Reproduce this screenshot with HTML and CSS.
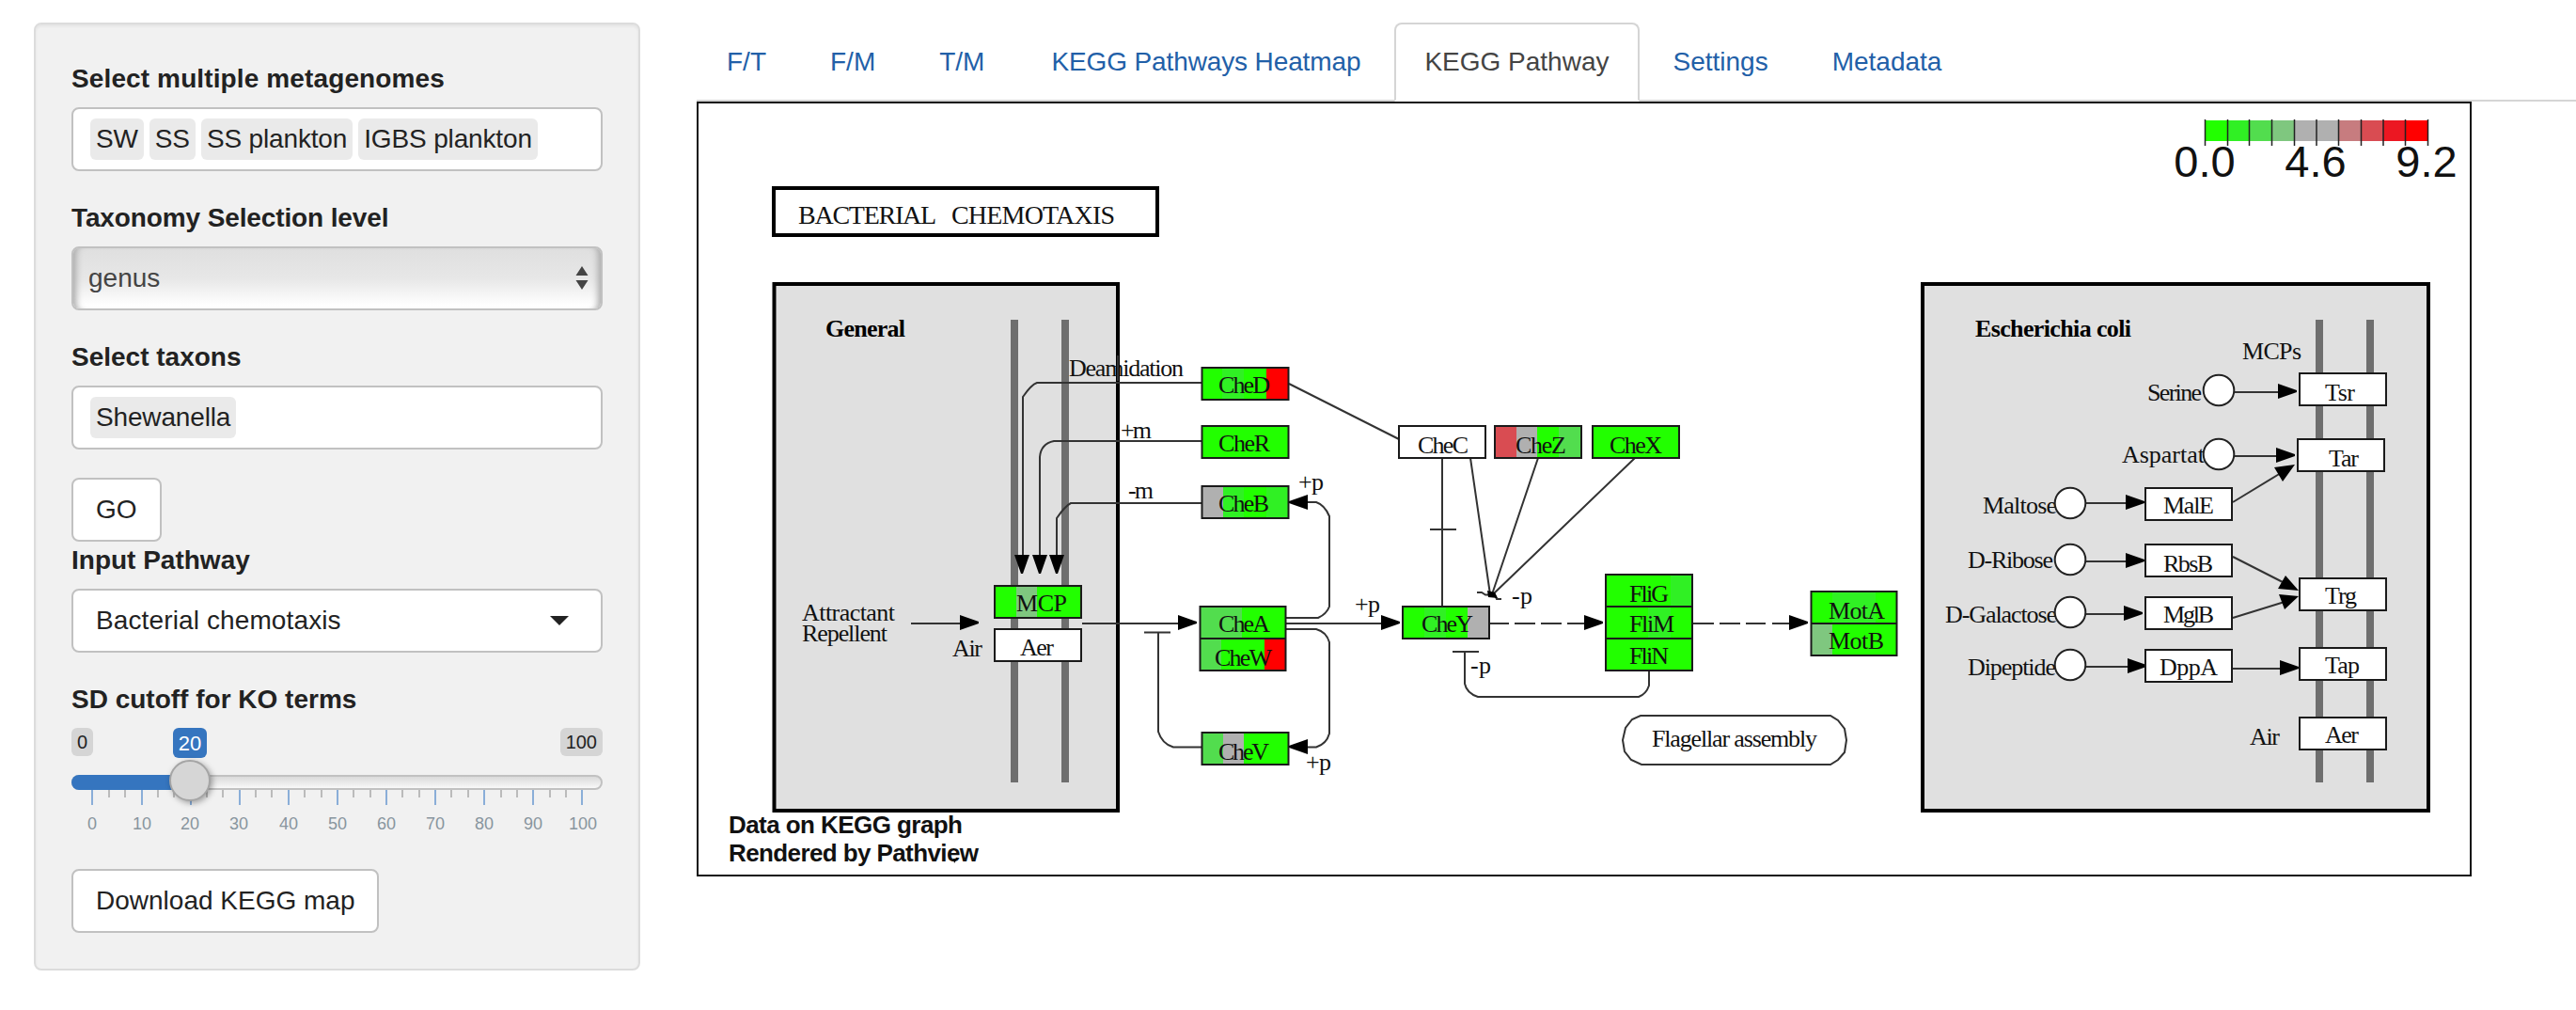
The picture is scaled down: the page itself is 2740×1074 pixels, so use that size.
FILE: index.html
```html
<!DOCTYPE html>
<html lang="en">
<head>
<meta charset="utf-8">
<title>KEGG Pathway</title>
<link rel="stylesheet" href="styles.css">
</head>
<body>
<div class="layout">
  <aside class="well">
    <div class="field">
      <label class="label wide">Select multiple metagenomes</label>
      <div class="control tags"><span class="tag">SW</span><span class="tag">SS</span><span class="tag">SS plankton</span><span class="tag">IGBS plankton</span></div>
    </div>
    <div class="field">
      <label class="label tight">Taxonomy Selection level</label>
      <div class="control native"><span>genus</span>
        <svg class="updown" width="14" height="26" viewBox="0 0 14 26"><path d="M7 0 13.5 10H.5zM7 25 13.5 15H.5z" fill="#444"/></svg>
      </div>
    </div>
    <div class="field">
      <label class="label">Select taxons</label>
      <div class="control tags"><span class="tag">Shewanella</span></div>
    </div>
    <button class="btn">GO</button>
    <div class="field">
      <label class="label">Input Pathway</label>
      <div class="control dropdown"><span class="wide">Bacterial chemotaxis</span>
        <svg width="20" height="10" viewBox="0 0 20 10"><path d="M0 0H20L10 10z" fill="#222"/></svg>
      </div>
    </div>
    <div class="slider-field">
      <label class="label">SD cutoff for KO terms</label>
      <div class="slider">
        <div class="limits"><span class="limit">0</span><span class="limit">100</span></div>
        <div class="track"><div class="fill"></div></div>
        <svg class="scale" width="565" height="50" viewBox="0 0 565 50">
          <path class="minor" d="M40 0v8M57 0v8M92 0v8M109 0v8M144 0v8M161 0v8M196 0v8M213 0v8M248 0v8M266 0v8M300 0v8M318 0v8M352 0v8M370 0v8M404 0v8M422 0v8M457 0v8M474 0v8M509 0v8M526 0v8"/>
          <path class="major" d="M22 0v16M75 0v16M127 0v16M179 0v16M231 0v16M283 0v16M335 0v16M387 0v16M439 0v16M491 0v16M543 0v16"/>
          <g class="nums"><text x="22" y="42">0</text><text x="75" y="42">10</text><text x="126" y="42">20</text><text x="178" y="42">30</text><text x="231" y="42">40</text><text x="283" y="42">50</text><text x="335" y="42">60</text><text x="387" y="42">70</text><text x="439" y="42">80</text><text x="491" y="42">90</text><text x="544" y="42">100</text></g>
        </svg>
        <span class="current">20</span>
        <span class="handle"></span>
      </div>
    </div>
    <button class="btn">Download KEGG map</button>
  </aside>

  <main class="content">
    <nav class="tabs">
      <a class="tab">F/T</a><a class="tab">F/M</a><a class="tab short">T/M</a><a class="tab tight">KEGG Pathways Heatmap</a><a class="tab active">KEGG Pathway</a><a class="tab">Settings</a><a class="tab">Metadata</a>
    </nav>
    <svg class="map" width="1888" height="824" viewBox="741 108 1888 824">
      <defs><path id="ar" d="M0-8 20-1V1L0 8z"/></defs>
      <rect x="742" y="109" width="1886" height="822" fill="#fff" stroke="#111" stroke-width="2"/>

      <rect x="823" y="200" width="408" height="50" class="frame nofill"/>
      <text x="849" y="238" class="title" textLength="147">BACTERIAL</text>
      <text x="1012" y="238" class="title" textLength="174">CHEMOTAXIS</text>

      <!-- colour key -->
      <g>
        <rect x="2345" y="128" width="24" height="22" fill="#22ff00"/><rect x="2369" y="128" width="24" height="22" fill="#30f024"/><rect x="2393" y="128" width="24" height="22" fill="#52dd4e"/><rect x="2416" y="128" width="24" height="22" fill="#7fc77f"/><rect x="2440" y="128" width="48" height="22" fill="#b0b0b0"/><rect x="2488" y="128" width="24" height="22" fill="#c77c7f"/><rect x="2511" y="128" width="24" height="22" fill="#d94c52"/><rect x="2535" y="128" width="24" height="22" fill="#ec1722"/><rect x="2559" y="128" width="24" height="22" fill="#f00"/>
        <path class="keyticks" d="M2345.5 127v28M2369.5 127v28M2392.500 127v28M2416.500 127v28M2440.500 127v28M2464 127v28M2487.500 127v28M2511.500 127v28M2535 127v28M2558.500 127v28M2582.500 127v28"/>
        <g class="keynum"><text x="2345" y="188">0.0</text><text x="2463" y="188">4.6</text><text x="2581" y="188">9.2</text></g>
      </g>

      <!-- cell panels and membranes -->
      <rect x="823.5" y="302" width="365.500" height="560" class="frame panel"/>
      <rect x="2045" y="302" width="538" height="560" class="frame panel"/>
      <path class="membrane" d="M1079 340V832M1133 340V832M2467 340V832M2521 340V832"/>

      <!-- connectors -->
      <g class="line">
        <path d="M1278 407H1103Q1097 409 1088 422V592M1278 469H1121Q1107 472 1106 486V592M1278 535H1139Q1133 538 1124 551V592"/>
        <path d="M1391 534H1400Q1409 537 1414 549V645Q1411 653 1402 657H1368M1151 663H1255M1368 663H1471M1368 669H1400Q1411 672 1414 683V780Q1411 791 1400 794.500H1388"/>
        <path d="M1278 794.500H1248Q1236 791 1232 778V672.500M1217 672.500H1245M1371 408 1488 467M1534 487V644M1521 563H1549"/>
        <path d="M1564 487 1585 632M1636 487 1587 632M1739 487 1588 632M1571 630H1576L1580 632.500H1590L1592 637H1597"/>
        <path d="M1585 663H1605M1611 663H1633M1639 663H1661M1667 663H1687M1801 663H1823M1829 663H1851M1857 663H1878M1885 663H1905"/>
        <path d="M1545 693H1573M1558 693V727Q1560 737 1572 741H1743Q1751 738 1754 729V714M969 663H1023"/>
        <path d="M2377 417H2425M2377 485H2423M2218 535H2263M2218 597H2263M2218 653H2261M2218 709H2265M2375 711H2427M2375 534 2426 503M2375 592 2430 620M2375 657 2430 640"/>
        <path d="M1745 761H1947L1955 766 1962 775 1964 787 1962 800 1955 808 1947 813H1746L1735 808 1728 799 1726 787 1729 774 1736 765z"/>
      </g>
      <path d="M1582 628 1590 630 1593 636 1583 635z"/>
      <g>
        <use href="#ar" transform="translate(1087 590) rotate(90)"/><use href="#ar" transform="translate(1106 590) rotate(90)"/><use href="#ar" transform="translate(1124 590) rotate(90)"/>
        <use href="#ar" transform="translate(1391 534) rotate(180)"/><use href="#ar" transform="translate(1391 794) rotate(180)"/>
        <use href="#ar" x="1021" y="662"/><use href="#ar" x="1253" y="662"/><use href="#ar" x="1469" y="662"/><use href="#ar" x="1685" y="662"/><use href="#ar" x="1903" y="662"/>
        <use href="#ar" x="2423" y="416"/><use href="#ar" x="2421" y="484"/><use href="#ar" x="2261" y="534"/><use href="#ar" x="2261" y="596"/><use href="#ar" x="2259" y="652"/><use href="#ar" x="2263" y="708"/><use href="#ar" x="2425" y="710"/>
        <path d="M2441 494 2419 497 2428 512zM2445 628 2431 612 2423 626zM2445 634 2424 632 2430 648z"/>
      </g>

      <!-- gene boxes: expression per sample -->
      <g fill="#22ff00">
        <path d="M1278 391h92v34h-92zM1278 453h92v34h-92zM1278 516h92v34h-92zM1058 623h92v34h-92zM1276 645h92v68h-92zM1278 779h92v34h-92zM1492 645h92v34h-92zM1590 453h92v34h-92zM1694 453h92v34h-92zM1708 611h92v102h-92zM1926 629h92v68h-92z"/>
      </g>
      <path fill="#30f024" d="M1300 391h23v34h-23zM1301 516h22v34h-22zM1347 516h23v34h-23zM1515 645h23v34h-23zM1777 611h23v34h-23zM1753 645h24v34h-24zM1949 629h46v34h-46z"/>
      <path fill="#52dd4e" d="M1276 645h45v34h-45zM1276 679h23v34h-23zM1278 779h23v34h-23zM1658 453h24v34h-24z"/>
      <path fill="#7fc77f" d="M1081 623h22v34h-22zM1926 663h23v34h-23z"/>
      <path fill="#b0b0b0" d="M1278 516h23v34h-23zM1301 779h22v34h-22zM1561 645h23v34h-23zM1613 453h22v34h-22z"/>
      <path fill="#d94c52" d="M1590 453h23v34h-23z"/>
      <path fill="#f00" d="M1347 391h23v34h-23zM1345 679h23v34h-23z"/>
      <path class="box" d="M1278.500 391h92v34h-92zM1278.500 453h92v34h-92zM1278.500 517h92v34h-92zM1058 623h92v34h-92zM1276.500 645h91v68h-91zM1276.500 679h91M1278.500 779h92v34h-92zM1492 645h92v34h-92zM1590 453h92v34h-92zM1694 453h92v34h-92zM1708 611h92v102h-92zM1708 645h92M1708 679h92M1926.500 629h91v68h-91zM1926.500 663h91"/>
      <path class="box white" d="M1488 453h92v34h-92zM1058 669h92v34h-92zM2446 397h92v34h-92zM2444 467h92v34h-92zM2282 519h92v34h-92zM2282 579h92v34h-92zM2282 635h92v34h-92zM2282 691h92v34h-92zM2446 615h92v34h-92zM2446 689h92v34h-92zM2446 763h92v34h-92z"/>

      <g class="txt">
        <text x="878" y="358" class="b" textLength="85">General</text><text x="2101" y="358" class="b" textLength="166">Escherichia coli</text>
        <text x="1137" y="400" textLength="122">Deamidation</text><text x="1192" y="466" textLength="33">+m</text><text x="1200" y="530" textLength="27">-m</text>
        <text x="1296" y="418" textLength="55">CheD</text><text x="1296" y="480" textLength="55">CheR</text><text x="1296" y="544" textLength="54">CheB</text>
        <text x="1508" y="482" textLength="54">CheC</text><text x="1612" y="482" textLength="54">CheZ</text><text x="1712" y="482" textLength="56">CheX</text>
        <text x="1381" y="521" textLength="27">+p</text><text x="1441" y="651" textLength="27">+p</text><text x="1389" y="819" textLength="27">+p</text><text x="1608" y="642" textLength="22">-p</text><text x="1564" y="716" textLength="22">-p</text>
        <text x="1081" y="650" textLength="54">MCP</text><text x="1085" y="697" textLength="36">Aer</text><text x="1013" y="698" textLength="32">Air</text>
        <text x="853" y="660" textLength="99">Attractant</text><text x="853" y="682" textLength="91">Repellent</text>
        <text x="1296" y="672" textLength="55">CheA</text><text x="1292" y="708" textLength="61">CheW</text><text x="1296" y="808" textLength="54">CheV</text><text x="1512" y="672" textLength="55">CheY</text>
        <text x="1733" y="640" textLength="42">FliG</text><text x="1733" y="672" textLength="48">FliM</text><text x="1733" y="706" textLength="42">FliN</text>
        <text x="1945" y="658" textLength="60">MotA</text><text x="1945" y="690" textLength="59">MotB</text>
        <text x="1757" y="794" textLength="176">Flagellar assembly</text>
        <text x="2385" y="382" textLength="63">MCPs</text><text x="2284" y="426" textLength="58">Serine</text><text x="2257" y="492" textLength="88">Aspartat</text><text x="2109" y="546" textLength="79">Maltose</text><text x="2093" y="604" textLength="91">D-Ribose</text><text x="2069" y="662" textLength="119">D-Galactose</text><text x="2093" y="718" textLength="94">Dipeptide</text>
        <text x="2473" y="426" textLength="32">Tsr</text><text x="2477" y="496" textLength="32">Tar</text><text x="2301" y="546" textLength="54">MalE</text><text x="2301" y="608" textLength="53">RbsB</text><text x="2301" y="662" textLength="54">MglB</text><text x="2297" y="718" textLength="62">DppA</text>
        <text x="2473" y="642" textLength="34">Trg</text><text x="2473" y="716" textLength="37">Tap</text><text x="2473" y="790" textLength="36">Aer</text><text x="2393" y="792" textLength="32">Air</text>
      </g>
      <path class="line" d="M1189 378V405"/>
      <g class="compound"><circle cx="2360" cy="415" r="16.300"/><circle cx="2360" cy="483" r="16.300"/><circle cx="2202" cy="535" r="16.300"/><circle cx="2202" cy="595" r="16.300"/><circle cx="2202" cy="651" r="16.300"/><circle cx="2202" cy="707" r="16.300"/></g>
      <g class="credit"><text x="775" y="886" textLength="249">Data on KEGG graph</text><text x="775" y="916" textLength="266">Rendered by Pathview</text></g>
      <path d="M1014 913H1018L1015 918z"/>
    </svg>
  </main>
</div>
</body>
</html>
```
FILE: styles.css
```css
* { box-sizing: border-box; }
body {
  margin: 0;
  background: #fff;
  color: #222;
  font: 28px/40px "Liberation Sans", Arial, sans-serif;
  overflow: hidden;
}
.layout {
  display: flex;
  align-items: flex-start;
  gap: 60px;
  padding: 24px 0 0 36px;
}
.well {
  width: 645px;
  height: 1008px;
  flex: none;
  display: flex;
  flex-direction: column;
  align-items: flex-start;
  padding: 38px;
  background: #f1f1f1;
  border: 2px solid #dcdcdc;
  border-radius: 8px;
  box-shadow: inset 0 2px 3px rgba(0, 0, 0, .06);
}
.field { width: 565px; margin-bottom: 30px; }
.label {
  display: block;
  margin-bottom: 10px;
  font-weight: bold;
}
.control {
  height: 68px;
  display: flex;
  align-items: center;
  background: #fff;
  border: 2px solid #c1c1c1;
  border-radius: 8px;
}
.tags { gap: 6px; padding: 0 18px; }
.tag {
  height: 44px;
  padding: 0 6px;
  line-height: 44px;
  letter-spacing: -.15px;
  white-space: nowrap;
  background: #eaeaea;
  border-radius: 6px;
}
.wide { letter-spacing: .12px; }
.tight { letter-spacing: -.12px; }
.native {
  justify-content: space-between;
  padding: 0 13px 0 16px;
  color: #444;
  background: linear-gradient(#dfdfdf, #e7e7e7 50%, #fff 95%);
  box-shadow: inset 9px 0 7px -6px #aaa, inset -9px 0 7px -6px #aaa;
}
.dropdown { justify-content: space-between; padding: 0 34px 0 24px; }
.btn {
  height: 68px;
  padding: 0 24px;
  color: #222;
  font: inherit;
  background: #fff;
  border: 2px solid #c1c1c1;
  border-radius: 8px;
}
.slider { position: relative; width: 565px; height: 150px; }
.limits { display: flex; justify-content: space-between; height: 50px; }
.limit {
  height: 30px;
  padding: 0 6px;
  font-size: 20px;
  line-height: 31px;
  background: #d5d5d5;
  border-radius: 6px;
}
.track {
  height: 16px;
  background: linear-gradient(#dadada, #f8f8f8);
  border: 2px solid #c1c1c1;
  border-radius: 8px;
}
.fill {
  width: 126px;
  height: 16px;
  margin: -2px;
  background: #3575bf;
  border-radius: 8px 0 0 8px;
}
.scale { display: block; }
.minor { stroke: #bbb; stroke-width: 2; }
.major { stroke: #8aaed8; stroke-width: 2; }
.nums { fill: #88959e; font-size: 18px; text-anchor: middle; }
.current {
  position: absolute;
  left: 108px;
  top: 0;
  width: 36px;
  height: 32px;
  color: #fff;
  font-size: 22px;
  line-height: 33px;
  text-align: center;
  background: #3575bf;
  border-radius: 6px;
}
.handle {
  position: absolute;
  left: 104px;
  top: 34px;
  width: 44px;
  height: 44px;
  background: #d6d6d6;
  border: 2px solid #a5a5a5;
  border-radius: 50%;
  box-shadow: 2px 2px 6px rgba(0, 0, 0, .35);
}
.content { flex: 1; min-width: 0; }
.tabs {
  display: flex;
  height: 84px;
  border-bottom: 2px solid #d5d5d5;
}
.tab {
  height: 84px;
  margin-right: 4px;
  padding: 20px 30px;
  color: #2260a8;
  white-space: nowrap;
  border: 2px solid transparent;
  border-radius: 8px 8px 0 0;
}
.short { margin-right: 7px; }
.active {
  color: #444;
  background: #fff;
  border-color: #d5d5d5 #d5d5d5 #fff;
}
.map { display: block; }
.frame { stroke: #000; stroke-width: 4; }
.nofill { fill: none; }
.panel { fill: #e0e0e0; }
.membrane { stroke: #6e6e6e; stroke-width: 8; }
.line { fill: none; stroke: #333; stroke-width: 2; }
.box { fill: none; stroke: #1a1a1a; stroke-width: 2; }
.white { fill: #fff; }
.compound { fill: #fff; stroke: #222; stroke-width: 2; }
.keyticks { stroke: #222; stroke-width: 1.500; }
.keynum { font-size: 47px; text-anchor: middle; fill: #111; }
.txt, .title {
  font-family: "Liberation Serif", "Times New Roman", serif;
  font-size: 26px;
  fill: #111;
}
.title { font-size: 28px; }
.b { font-weight: bold; fill: #000; }
.credit { font-size: 26px; font-weight: bold; fill: #111; }
```
